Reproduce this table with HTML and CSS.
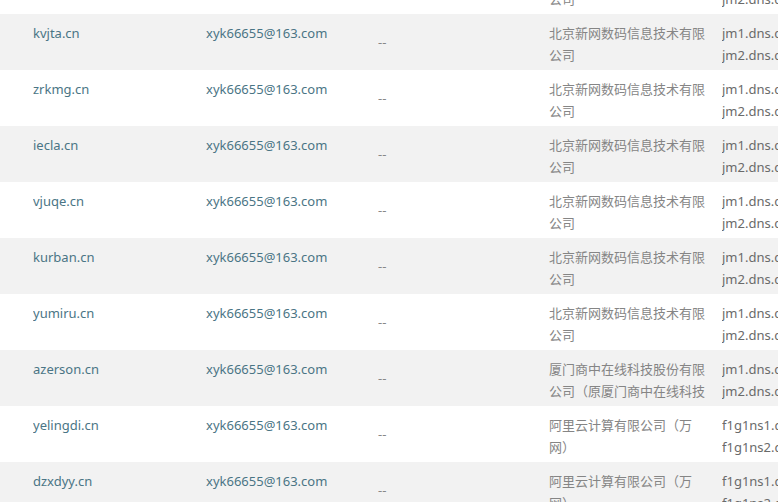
FILE: index.html
```html
<!DOCTYPE html>
<html lang="zh-CN">
<head>
<meta charset="utf-8">
<link rel="stylesheet" href="styles.css">
</head>
<body>
<div class="table">
  <div class="row">
    <div class="cell domain">ayxcv.cn</div>
    <div class="cell email">xyk66655@163.com</div>
    <div class="cell dash">--</div>
    <div class="cell company">北京新网数码信息技术有限公司</div>
    <div class="cell dns">jm1.dns.com<br>jm2.dns.com</div>
  </div>
  <div class="row">
    <div class="cell domain">kvjta.cn</div>
    <div class="cell email">xyk66655@163.com</div>
    <div class="cell dash">--</div>
    <div class="cell company">北京新网数码信息技术有限公司</div>
    <div class="cell dns">jm1.dns.com<br>jm2.dns.com</div>
  </div>
  <div class="row">
    <div class="cell domain">zrkmg.cn</div>
    <div class="cell email">xyk66655@163.com</div>
    <div class="cell dash">--</div>
    <div class="cell company">北京新网数码信息技术有限公司</div>
    <div class="cell dns">jm1.dns.com<br>jm2.dns.com</div>
  </div>
  <div class="row">
    <div class="cell domain">iecla.cn</div>
    <div class="cell email">xyk66655@163.com</div>
    <div class="cell dash">--</div>
    <div class="cell company">北京新网数码信息技术有限公司</div>
    <div class="cell dns">jm1.dns.com<br>jm2.dns.com</div>
  </div>
  <div class="row">
    <div class="cell domain">vjuqe.cn</div>
    <div class="cell email">xyk66655@163.com</div>
    <div class="cell dash">--</div>
    <div class="cell company">北京新网数码信息技术有限公司</div>
    <div class="cell dns">jm1.dns.com<br>jm2.dns.com</div>
  </div>
  <div class="row">
    <div class="cell domain">kurban.cn</div>
    <div class="cell email">xyk66655@163.com</div>
    <div class="cell dash">--</div>
    <div class="cell company">北京新网数码信息技术有限公司</div>
    <div class="cell dns">jm1.dns.com<br>jm2.dns.com</div>
  </div>
  <div class="row">
    <div class="cell domain">yumiru.cn</div>
    <div class="cell email">xyk66655@163.com</div>
    <div class="cell dash">--</div>
    <div class="cell company">北京新网数码信息技术有限公司</div>
    <div class="cell dns">jm1.dns.com<br>jm2.dns.com</div>
  </div>
  <div class="row">
    <div class="cell domain">azerson.cn</div>
    <div class="cell email">xyk66655@163.com</div>
    <div class="cell dash">--</div>
    <div class="cell company">厦门商中在线科技股份有限公司（原厦门商中在线科技有限公司）</div>
    <div class="cell dns">jm1.dns.com<br>jm2.dns.com</div>
  </div>
  <div class="row">
    <div class="cell domain">yelingdi.cn</div>
    <div class="cell email">xyk66655@163.com</div>
    <div class="cell dash">--</div>
    <div class="cell company">阿里云计算有限公司（万网）</div>
    <div class="cell dns">f1g1ns1.dnspod.net<br>f1g1ns2.dnspod.net</div>
  </div>
  <div class="row">
    <div class="cell domain">dzxdyy.cn</div>
    <div class="cell email">xyk66655@163.com</div>
    <div class="cell dash">--</div>
    <div class="cell company">阿里云计算有限公司（万网）</div>
    <div class="cell dns">f1g1ns1.dnspod.net<br>f1g1ns2.dnspod.net</div>
  </div>
</div>
</body>
</html>
```
FILE: styles.css
```css
html, body {
  margin: 0;
  padding: 0;
  background: #ffffff;
  overflow: hidden;
}
body {
  font-family: "Noto Sans", "Noto Sans CJK SC", sans-serif;
  font-size: 13px;
  line-height: 22px;
}
.table {
  margin-top: -42px;
  width: 778px;
}
.row {
  display: grid;
  grid-template-columns: 173px 172px 171px 173px 1fr;
  padding-left: 33px;
  height: 56px;
  box-sizing: border-box;
  background: #ffffff;
  overflow: hidden;
}
.row:nth-child(even) {
  background: #f2f2f2;
}
.cell {
  padding-top: 8px;
  white-space: nowrap;
  overflow: hidden;
}
.domain, .email {
  color: #4a7585;
}
.dash {
  color: #888888;
  padding-top: 17px;
}
.company {
  color: #858585;
  white-space: normal;
  width: 160px;
  height: 44px;
  overflow: hidden;
  font-family: "Noto Sans CJK SC", sans-serif;
}
.dns {
  color: #6a6a6a;
}
```
